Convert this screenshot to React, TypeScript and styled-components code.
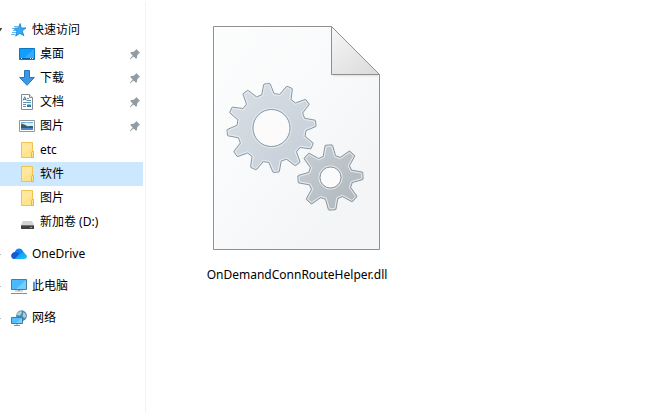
import React from "react";
import styled, { createGlobalStyle } from "styled-components";

const GlobalStyle = createGlobalStyle`
  * { box-sizing: border-box; }
  body {
    margin: 0;
    background: #fff;
    color: #000;
    font: 12px/24px "Noto Sans", "Noto Sans CJK SC", sans-serif;
  }
  button { font: inherit; color: inherit; border: 0; background: none; padding: 0; text-align: left; }
  ul { list-style: none; margin: 0; padding: 0; }
  svg { display: block; flex: none; }
`;

const Window = styled.div`
  display: grid;
  grid-template-columns: 146px minmax(0, 1fr);
  min-height: 100vh;
`;

const Sidebar = styled.nav`
  display: flex;
  flex-direction: column;
  gap: 8px;
  padding: 16px 2px 0 0;
  margin-top: 2px;
  border-right: 1px solid #f2f2f2;
`;

const Row = styled.button<{ $level: number; $selected?: boolean }>`
  display: flex;
  align-items: center;
  width: 100%;
  height: 24px;
  gap: ${(p) => (p.$level === 1 ? 5 : 5)}px;
  padding-right: 2px;
  padding-left: ${(p) => (p.$level === 1 ? 19 : 0)}px;
  background: ${(p) => (p.$selected ? "#cce8ff" : "transparent")};
`;

const Lead = styled.span`
  display: flex;
  align-items: center;
  gap: 8px;
`;

const Label = styled.span`
  flex: 1;
  white-space: nowrap;
`;

const Content = styled.main`
  padding: 26px 57px;
`;

const FileItem = styled.button`
  display: flex;
  flex-direction: column;
  align-items: center;
  gap: 12px;
  width: 188px;
`;

const Icon = ({ children }: { children: React.ReactNode }) => (
  <svg width="16" height="16" viewBox="0 0 16 16" aria-hidden="true">{children}</svg>
);

const Chevron = ({ open }: { open?: boolean }) => (
  <svg width="3" height="8" viewBox="0 0 3 8" aria-hidden="true">
    {open ? <path d="M0 2h2.3L0 5.5z" fill="#404040" /> : <path d="M0 4.5h1" stroke="#b4b4b4" />}
  </svg>
);

const Pin = () => (
  <svg width="12" height="12" viewBox="0 0 12 12" aria-hidden="true">
    <path d="M7.2 1 11 4.8 9.8 5.6 8.3 7.3 8 10 7 10.8 4.6 8.4 1 11.4.7 11.1 3.7 7.4 1.3 5 2.2 4 4.7 3.8 6.5 2.2z" fill="#919ca4" />
  </svg>
);

const StarIcon = () => (
  <Icon>
    <path d="M9.2 1.5 10.3 6l4.7-.1-3.8 3 1.7 4.8-4.1-2.3-4.1 2.8 1-4.8L2.6 6.3l4.6-.4z" fill="#35a9f2" stroke="#1684ce" strokeWidth=".8" />
    <path d="M3 4.5h4M1 6.5h3M2 8.5h3M1 10.5h4M0 12.5h4" stroke="#56b3ee" strokeWidth=".9" />
  </Icon>
);

const DesktopIcon = () => (
  <Icon>
    <path d="M.5 2.5h15v11H.5z" fill="#159dfb" stroke="#0878c9" />
    <path d="M15 3v9H5z" fill="#35adff" />
    <path d="M1 12.5h14" stroke="#075fa6" />
    <path d="M2 12.5h1M11 12.5h1M13 12.5h1" stroke="#fff" />
  </Icon>
);

const DownloadIcon = () => (
  <Icon><path d="M5.5.5h5v7h4.8L8 15.3.7 7.5h4.8z" fill="#3b97e8" stroke="#2577bd" /></Icon>
);

const DocumentIcon = () => (
  <Icon>
    <path d="M2.5.5h8l3 3v12h-11z" fill="#fff" stroke="#858b90" />
    <path d="M10.5.5v3h3" fill="#e4e7e9" stroke="#858b90" />
    <path d="m4 6.5 1.7-3.7L7.4 6.5M5 5.3h2" fill="none" stroke="#2588ca" />
    <path d="M8 4.5h2M8 6.5h4M4 8.5h8M4 10.5h3M4 12.5h3" stroke="#638da8" />
    <path d="M8 10h4v3H8z" fill="#34799f" />
    <path d="M8 10h4v1H8z" fill="#83c9ed" />
  </Icon>
);

const PictureIcon = () => (
  <Icon>
    <path d="M.5 2.5h15v11H.5z" fill="#fff" stroke="#969696" />
    <path d="M2 4h12v8H2z" fill="#6eaee0" />
    <path d="M2 6c4-2 8-1 12-1v3H2z" fill="#d7ecf7" />
    <path d="M2 6c3 0 5 1.4 7 2.5 2-.5 3-.5 5-.3V10H2z" fill="#315e62" />
    <path d="M2 10h12v2H2z" fill="#4b87c5" />
  </Icon>
);

const FolderIcon = () => (
  <Icon>
    <path d="M2.5.5h11v9h1v6h-12z" fill="#ffe38c" stroke="#edc450" />
    <path d="M3 1h10v3L3 13z" fill="#ffe89d" />
    <path d="M12.5 15.5v-5l.5-1h1.5v6z" fill="#ffe38c" stroke="#e7b93f" />
  </Icon>
);

const DriveIcon = () => (
  <Icon>
    <path d="M4 7h9l2 4H2z" fill="#d0d2d3" />
    <path d="M2 11h13v4H2z" fill="#3e4244" />
    <path d="M2 11.5h13" stroke="#727779" />
    <path d="M11 13.5h2" stroke="#35e65a" />
  </Icon>
);

const OneDriveIcon = () => (
  <Icon>
    <defs>
      <linearGradient id="cloud" x2="1" y2="1"><stop stopColor="#1689ed" /><stop offset="1" stopColor="#1ac8f6" /></linearGradient>
    </defs>
    <path d="M3.8 6.1C5.2 2 9.8 1.5 11.8 4.7L13 7 5 13H3.5C-.6 12.8-1 7 3.8 6.1z" fill="#0d86ef" />
    <path d="M3 6.4c2-.8 4.2 0 5.5 1.6L3.8 13C-.5 13-.9 7.6 3 6.4z" fill="#1959d3" />
    <path d="M3.7 13 9 7.4c2-1.9 4.5-1.2 5.2.6 2.7 1.2 2.2 5-1 5z" fill="url(#cloud)" />
  </Icon>
);

const ComputerIcon = () => (
  <Icon>
    <path d="M.5 1.5h15v10H.5z" fill="#4bb9ff" stroke="#437fa5" />
    <path d="M15 2v9H5z" fill="#75ceff" />
    <path d="M7 12h2v1H7z" fill="#87929a" />
    <path d="M4 13h8" stroke="#a9b2b9" />
    <path d="M0 15.5h16" stroke="#7890a5" />
  </Icon>
);

const NetworkIcon = () => (
  <Icon>
    <circle cx="10.5" cy="5.7" r="5.4" fill="#4c87a8" />
    <path d="M7 2.5 10 .8l1 2-2 3-4-1zM12.5 2l2 2 .5 3-2 1-1.5-2z" fill="#a9d2df" />
    <path d="M.5 7.5h11v6H.5z" fill="#54bfff" stroke="#3e7da5" />
    <path d="M11 8v5H5z" fill="#7bd1ff" />
    <path d="M6 14v1M3 15.5h6" stroke="#8095a4" />
  </Icon>
);

type Entry = { label: string; icon: React.ReactNode; pinned?: boolean; selected?: boolean };

const quickItems: Entry[] = [
  { label: "桌面", icon: <DesktopIcon />, pinned: true },
  { label: "下载", icon: <DownloadIcon />, pinned: true },
  { label: "文档", icon: <DocumentIcon />, pinned: true },
  { label: "图片", icon: <PictureIcon />, pinned: true },
  { label: "etc", icon: <FolderIcon /> },
  { label: "软件", icon: <FolderIcon />, selected: true },
  { label: "图片", icon: <FolderIcon /> },
  { label: "新加卷 (D:)", icon: <DriveIcon /> },
];

const groups: { label: string; icon: React.ReactNode; items?: Entry[] }[] = [
  { label: "快速访问", icon: <StarIcon />, items: quickItems },
  { label: "OneDrive", icon: <OneDriveIcon /> },
  { label: "此电脑", icon: <ComputerIcon /> },
  { label: "网络", icon: <NetworkIcon /> },
];

function gearPath(cx: number, cy: number, teeth: number, start: number, outer: number, root: number, tip: number, base: number) {
  const points: string[] = [];
  for (let i = 0; i < teeth; i++) {
    const a = ((start + (i * 360) / teeth) * Math.PI) / 180;
    const at = (r: number, side: number) =>
      `${(cx + r * Math.cos(a) - side * Math.sin(a)).toFixed(2)} ${(cy + r * Math.sin(a) + side * Math.cos(a)).toFixed(2)}`;
    points.push(at(root, -base), at(outer - 0.6, -tip), at(outer, -tip + 0.5), at(outer, tip - 0.5), at(outer - 0.6, tip), at(root, base));
  }
  return `M${points.join("L")}Z`;
}

type GearProps = { cx: number; cy: number; teeth: number; start: number; outer: number; root: number; tip: number; base: number; hole: number; fill: string };

const Gear = (g: GearProps) => (
  <g>
    <path d={gearPath(g.cx, g.cy, g.teeth, g.start, g.outer, g.root, g.tip, g.base)} fill={g.fill} stroke="#8f989f" />
    <path d={gearPath(g.cx, g.cy, g.teeth, g.start, g.outer - 1.2, g.root - 1, g.tip - 1, g.base - 1)} fill="none" stroke="#e4edf3" />
    <circle cx={g.cx} cy={g.cy} r={g.hole + 1.2} fill="none" stroke="#e4edf3" />
    <circle cx={g.cx} cy={g.cy} r={g.hole} fill="#fbfbfc" stroke="#8f989f" />
  </g>
);

const DllIcon = () => (
  <svg width="168" height="225" viewBox="0 0 168 225" aria-hidden="true">
    <defs>
      <linearGradient id="sheet" x2="1" y2="1"><stop stopColor="#fcfdfd" /><stop offset=".4" stopColor="#f9fafb" /><stop offset=".8" stopColor="#f4f5f6" /><stop offset="1" stopColor="#f4f5f6" /></linearGradient>
      <linearGradient id="fold" x2=".8" y2="1"><stop stopColor="#f7f7f7" /><stop offset="1" stopColor="#dcdcdc" /></linearGradient>
      <linearGradient id="large" x2="1" y2="1"><stop stopColor="#d9dfe6" /><stop offset="1" stopColor="#c4ced7" /></linearGradient>
      <linearGradient id="small" x2="1" y2="1"><stop stopColor="#c9d0d5" /><stop offset="1" stopColor="#adb6bb" /></linearGradient>
    </defs>
    <path d="M.5.5h118l48 48v175H.5z" fill="url(#sheet)" stroke="#8f8f8f" />
    <path d="M1.5 222.5v-221h116" fill="none" stroke="#fff" />
    <path d="M120 49.5h45" stroke="#e5e5e5" strokeWidth="2" />
    <path d="M118.5.5v48h48z" fill="url(#fold)" stroke="#8f8f8f" />
    <Gear cx={58.5} cy={102} teeth={12} start={-96} outer={44.5} root={34} tip={3.3} base={6.2} hole={18.5} fill="url(#large)" />
    <Gear cx={117.5} cy={151.5} teeth={8} start={-93} outer={32.5} root={21.5} tip={3.8} base={6.2} hole={10.5} fill="url(#small)" />
  </svg>
);

export default function App() {
  return (
    <>
      <GlobalStyle />
      <Window>
        <Sidebar>
          {groups.map((group) => (
            <div key={group.label}>
              <Row $level={0}>
                <Lead><Chevron open={!!group.items} />{group.icon}</Lead>
                <Label>{group.label}</Label>
              </Row>
              {group.items && (
                <ul>
                  {group.items.map((item, i) => (
                    <li key={i}>
                      <Row $level={1} $selected={item.selected}>
                        {item.icon}
                        <Label>{item.label}</Label>
                        {item.pinned && <Pin />}
                      </Row>
                    </li>
                  ))}
                </ul>
              )}
            </div>
          ))}
        </Sidebar>
        <Content>
          <FileItem>
            <DllIcon />
            <span>OnDemandConnRouteHelper.dll</span>
          </FileItem>
        </Content>
      </Window>
    </>
  );
}
